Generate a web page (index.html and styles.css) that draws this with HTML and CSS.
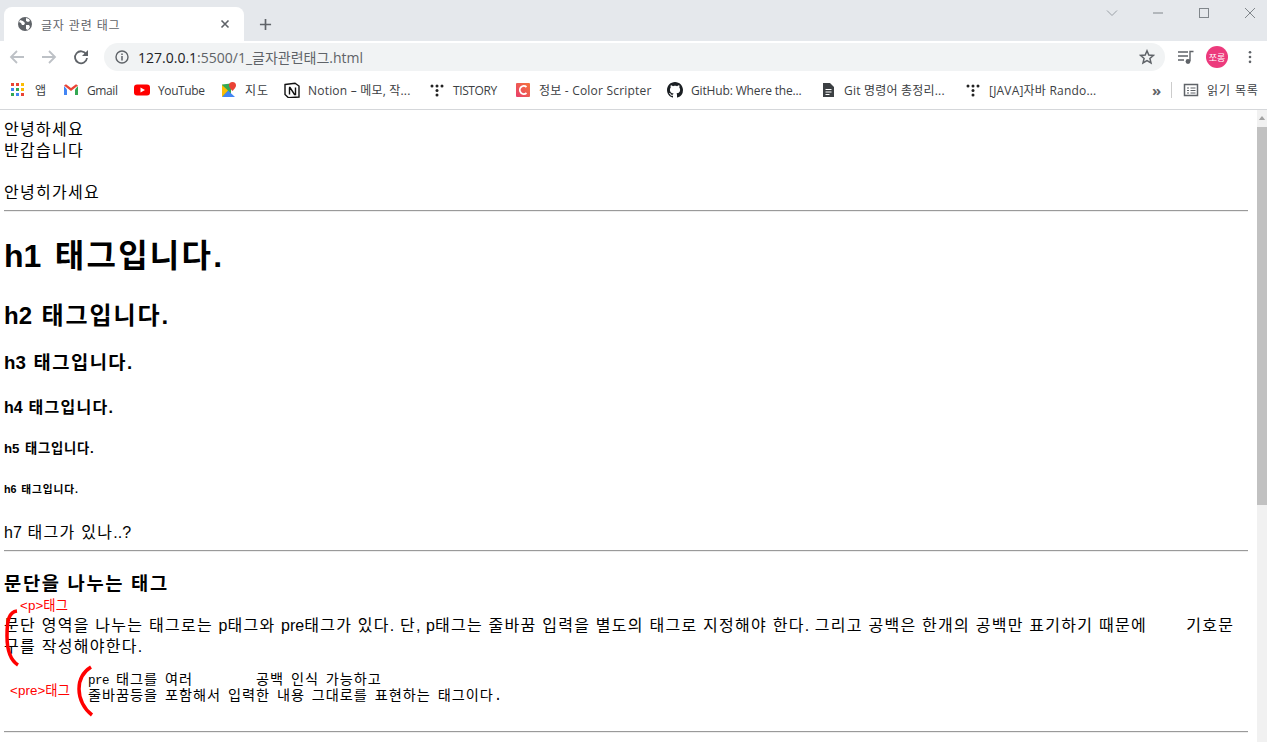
FILE: index.html
```html
<!DOCTYPE html>
<html lang="ko">
<head>
<meta charset="utf-8">
<title>글자 관련 태그</title>
<link rel="stylesheet" href="styles.css">
</head>
<body>
<div class="browser">
  <div class="tabstrip">
    <div class="tab">
      <svg class="tab-globe" viewBox="0 0 16 16"><circle cx="8" cy="8" r="7" fill="#5f6368"/><path d="M3 4l3 1 2 2-1 2-2 0-1-2-2-1zM9 2l3 1 1 2-2 1-2-1zM9 9l3 0 1 2-2 3-2-1z" fill="#fff"/></svg>
      <span class="tab-title">글자 관련 태그</span>
      <svg class="tab-close" viewBox="0 0 10 10"><path d="M1.5 1.5l7 7M8.5 1.5l-7 7" stroke="#5f6368" stroke-width="1.6"/></svg>
    </div>
    <svg class="newtab" viewBox="0 0 14 14"><path d="M7 1v12M1 7h12" stroke="#5f6368" stroke-width="1.8"/></svg>
    <div class="winctl">
      <svg class="win-ico" viewBox="0 0 12 12"><path d="M1 3.5l5 5 5-5" fill="none" stroke="#9aa0a6"/></svg>
      <svg class="win-ico" viewBox="0 0 12 12"><path d="M1 6h10" stroke="#80868b"/></svg>
      <svg class="win-ico" viewBox="0 0 12 12"><rect x="1.5" y="1.5" width="9" height="9" fill="none" stroke="#80868b"/></svg>
      <svg class="win-ico" viewBox="0 0 12 12"><path d="M1 1l10 10M11 1L1 11" stroke="#80868b"/></svg>
    </div>
  </div>
  <div class="toolbar">
    <svg class="nav" viewBox="0 0 16 16"><path d="M15 8H2M8 2L2 8l6 6" fill="none" stroke="#bdc1c6" stroke-width="1.8"/></svg>
    <svg class="nav" viewBox="0 0 16 16"><path d="M1 8h13M8 2l6 6-6 6" fill="none" stroke="#bdc1c6" stroke-width="1.8"/></svg>
    <svg class="nav" viewBox="0 0 16 16"><path d="M13.2 5.2A6 6 0 1 0 14 9" fill="none" stroke="#5f6368" stroke-width="1.8"/><path d="M15 1v6H9z" fill="#5f6368"/></svg>
    <div class="omnibox">
      <svg class="info" viewBox="0 0 14 14"><circle cx="7" cy="7" r="6" fill="none" stroke="#5f6368" stroke-width="1.4"/><path d="M7 6v4.4M7 3.4v1.5" stroke="#5f6368" stroke-width="1.5"/></svg>
      <span class="url">127.0.0.1<span class="url-dim">:5500/1_글자관련태그.html</span></span>
      <svg class="star" viewBox="0 0 16 16"><path d="M8 1.8l1.8 4.2 4.6.4-3.5 3 1.1 4.5L8 11.5l-4 2.4 1.1-4.5-3.5-3 4.6-.4z" fill="none" stroke="#5f6368" stroke-width="1.5"/></svg>
    </div>
    <svg class="media" viewBox="0 0 16 16"><path d="M0 3h10M0 7h10M0 11h6" stroke="#5f6368" stroke-width="1.4"/><path d="M12 12V2.5h3.5" fill="none" stroke="#5f6368" stroke-width="1.4"/><circle cx="10" cy="12.5" r="2.4" fill="#5f6368"/></svg>
    <div class="avatar">쪼롱</div>
    <svg class="menu" viewBox="0 0 4 16"><circle cx="2" cy="2.5" r="1.5" fill="#5f6368"/><circle cx="2" cy="8" r="1.5" fill="#5f6368"/><circle cx="2" cy="13.5" r="1.5" fill="#5f6368"/></svg>
  </div>
  <div class="bookmarks">
    <div class="bm bm-apps">
      <svg class="bm-ico" viewBox="0 0 14 14">
        <rect x="0" y="0" width="3" height="3" fill="#ea4335"/><rect x="5" y="0" width="3" height="3" fill="#ea4335"/><rect x="10" y="0" width="3" height="3" fill="#fbbc04"/>
        <rect x="0" y="5" width="3" height="3" fill="#4285f4"/><rect x="5" y="5" width="3" height="3" fill="#34a853"/><rect x="10" y="5" width="3" height="3" fill="#fbbc04"/>
        <rect x="0" y="10" width="3" height="3" fill="#34a853"/><rect x="5" y="10" width="3" height="3" fill="#4285f4"/><rect x="10" y="10" width="3" height="3" fill="#ea4335"/>
      </svg><span>앱</span>
    </div>
    <div class="bm">
      <svg class="bm-ico" viewBox="0 0 16 16"><path d="M1 4v9h3V7.500z" fill="#4285f4"/><path d="M12 7.500V13h3V4z" fill="#34a853"/><path d="M1 3.500L8 9l7-5.500-2-1.200L8 6 3 2.300z" fill="#ea4335"/></svg><span class="tight">Gmail</span>
    </div>
    <div class="bm">
      <svg class="bm-ico" viewBox="0 0 16 16"><rect x="0" y="2.500" width="16" height="11" rx="3" fill="#f00"/><path d="M6.500 5.500v5L11 8z" fill="#fff"/></svg><span class="tight">YouTube</span>
    </div>
    <div class="bm">
      <svg class="bm-ico" viewBox="0 0 16 16"><path d="M1 2.500l9-1v13H1z" fill="#34a853"/><path d="M1 15l6-6.500L14 15z" fill="#4285f4"/><path d="M1 3l6 5.500L1 15z" fill="#fbbc04"/><path d="M11.500 0a3.500 3.500 0 0 1 3.500 3.500c0 2.300-3.500 5.500-3.500 5.500S8 5.800 8 3.500A3.500 3.500 0 0 1 11.500 0z" fill="#ea4335"/></svg><span class="wide">지도</span>
    </div>
    <div class="bm">
      <svg class="bm-ico" viewBox="0 0 16 16"><path d="M1 2.500L11 1.200l4 2.800v11l-10.500.8L1 12.500z" fill="#fff" stroke="#111" stroke-width="1.400"/><path d="M5.500 5.500v7M5 5.500h1l4.500 7h1v-7" fill="none" stroke="#111" stroke-width="1.400"/></svg><span class="hangul-mix">Notion – 메모, 작...</span>
    </div>
    <div class="bm">
      <svg class="bm-ico" viewBox="0 0 16 16"><circle cx="3" cy="4" r="1.500" fill="#222"/><circle cx="8" cy="4" r="1.500" fill="#222"/><circle cx="13" cy="4" r="1.500" fill="#222"/><circle cx="8" cy="8.500" r="1.500" fill="#222"/><circle cx="8" cy="13" r="1.500" fill="#222"/></svg><span class="tight">TISTORY</span>
    </div>
    <div class="bm">
      <svg class="bm-ico" viewBox="0 0 16 16"><defs><linearGradient id="cs" x1="0" y1="1" x2="1" y2="0"><stop offset="0" stop-color="#e83e6c"/><stop offset="1" stop-color="#f4743b"/></linearGradient></defs><rect x="1" y="1" width="14" height="14" rx="1" fill="url(#cs)"/><path d="M11.500 5a4 4 0 1 0 0 6" fill="none" stroke="#fff" stroke-width="1.800"/></svg><span class="hangul-mix">정보 - Color Scripter</span>
    </div>
    <div class="bm">
      <svg class="bm-ico" viewBox="0 0 16 16"><path fill="#1b1f23" d="M8 0C3.580 0 0 3.580 0 8c0 3.540 2.290 6.530 5.470 7.590.4.070.55-.17.55-.38 0-.19-.01-.82-.01-1.490-2.010.37-2.530-.49-2.690-.94-.09-.23-.48-.94-.82-1.130-.28-.15-.68-.52-.01-.53.630-.01 1.080.58 1.230.82.720 1.210 1.870.87 2.330.66.070-.52.280-.87.510-1.070-1.780-.2-3.640-.89-3.640-3.950 0-.87.310-1.590.82-2.150-.08-.2-.36-1.020.08-2.120 0 0 .67-.21 2.200.82.640-.18 1.320-.27 2-.27.680 0 1.360.09 2 .27 1.530-1.040 2.200-.82 2.200-.82.440 1.100.160 1.920.08 2.120.510.560.820 1.270.820 2.150 0 3.070-1.870 3.750-3.650 3.950.290.250.540.730.540 1.480 0 1.070-.01 1.930-.01 2.200 0 .210.150.460.550.380A8.013 8.013 0 0 0 16 8c0-4.420-3.580-8-8-8z"/></svg><span>GitHub: Where the...</span>
    </div>
    <div class="bm">
      <svg class="bm-ico" viewBox="0 0 16 16"><path d="M3 1h7l4 4v10H3z" fill="#3c4043"/><path d="M5.500 7.500h6M5.500 10h6M5.500 12.500h4" stroke="#fff"/></svg><span class="hangul-mix">Git 명령어 총정리...</span>
    </div>
    <div class="bm">
      <svg class="bm-ico" viewBox="0 0 16 16"><circle cx="3" cy="4" r="1.500" fill="#222"/><circle cx="8" cy="4" r="1.500" fill="#222"/><circle cx="13" cy="4" r="1.500" fill="#222"/><circle cx="8" cy="8.500" r="1.500" fill="#222"/><circle cx="8" cy="13" r="1.500" fill="#222"/></svg><span class="hangul-mix">[JAVA]자바 Rando...</span>
    </div>
    <div class="bm-end">
      <span class="chev">»</span>
      <i class="bm-sep"></i>
      <svg class="bm-ico" viewBox="0 0 16 16"><rect x="1.500" y="2.500" width="13" height="11" fill="none" stroke="#5f6368" stroke-width="1.500"/><path d="M4 6h2M4 8.500h2M4 11h2M7.500 6h5M7.500 8.500h5M7.500 11h5" stroke="#5f6368"/></svg>
      <span class="readlist">읽기 목록</span>
    </div>
  </div>
  <div class="viewport">
    <main class="page">
      <div class="line">안녕하세요</div>
      <div class="line">반갑습니다</div>
      <div class="line">&nbsp;</div>
      <div class="line">안녕히가세요</div>
      <hr>
      <h1><span class="lat">h1</span> 태그입니다<span class="lat">.</span></h1>
      <h2><span class="lat">h2</span> 태그입니다<span class="lat">.</span></h2>
      <h3><span class="lat">h3</span> 태그입니다<span class="lat">.</span></h3>
      <h4><span class="lat">h4</span> 태그입니다<span class="lat">.</span></h4>
      <h5><span class="lat">h5</span> 태그입니다<span class="lat">.</span></h5>
      <h6><span class="lat">h6</span> 태그입니다<span class="lat">.</span></h6>
      <div class="line"><span class="lat">h7</span> 태그가 있나<span class="lat">..?</span></div>
      <hr>
      <h3 class="section-title">문단을 나누는 태그</h3>
      <p>문단 영역을 나누는 태그로는 <span class="lat">p</span>태그와 <span class="lat">pre</span>태그가 있다<span class="lat">.</span> 단<span class="lat">,</span> <span class="lat">p</span>태그는 줄바꿈 입력을 별도의 태그로 지정해야 한다<span class="lat">.</span> 그리고 공백은 한개의 공백만 표기하기 때문에 &nbsp;&nbsp;&nbsp;&nbsp;&nbsp; 기호문구를 작성해야한다<span class="lat">.</span></p>
      <pre><span class="pre-lat">pre</span> 태그를 여러         공백 인식 가능하고
줄바꿈등을 포함해서 입력한 내용 그대로를 표현하는 태그이다.

</pre>
      <hr>
      <div class="note note-p">&lt;p&gt;태그</div>
      <div class="note note-pre">&lt;pre&gt;태그</div>
      <svg class="brace brace-p" viewBox="0 0 14 56"><path d="M13 1C5 2 3 10 3 26c0 14 3 24 11 29" fill="none" stroke="#f00" stroke-width="3.500"/></svg>
      <svg class="brace brace-pre" viewBox="0 0 16 50"><path d="M14 1C6 6 2 14 2 23c0 10 5 20 13 26" fill="none" stroke="#f00" stroke-width="3.500"/></svg>
    </main>
    <div class="scrollbar">
      <div class="sb-btn"><svg viewBox="0 0 10 6" class="sb-arrow"><path d="M5 0l4 5H1z" fill="#a3a3a3"/></svg></div>
      <div class="sb-thumb"></div>
    </div>
  </div>
</div>
</body>
</html>
```
FILE: styles.css
```css
* { box-sizing: border-box; }
html, body { margin: 0; height: 100%; overflow: hidden; background: #fff; }
.browser { height: 742px; display: flex; flex-direction: column; font-family: "Open Sans", "Noto Sans CJK KR", sans-serif; }

.tabstrip { height: 41px; background: #e5e8ec; display: flex; align-items: flex-end; padding-left: 4px; flex: none; }
.tab { width: 240px; height: 34px; background: #fff; border-radius: 8px 8px 0 0; display: flex; align-items: center; padding: 0 14px 0 13px; }
.tab-globe { width: 16px; height: 16px; flex: none; }
.tab-title { margin-left: 8px; font-size: 12px; color: #5f6368; flex: 1; font-family: "Noto Sans CJK KR", sans-serif; letter-spacing: .8px; }
.tab-close { width: 10px; height: 10px; flex: none; }
.newtab { width: 13px; height: 13px; margin: 0 0 10px 15px; flex: none; }
.winctl { margin-left: auto; align-self: flex-start; display: flex; gap: 34px; padding: 7px 11px 0 0; }
.win-ico { width: 12px; height: 12px; display: block; }

.toolbar { height: 32px; display: flex; align-items: center; padding: 0 0 0 9px; flex: none; background: #fff; }
.nav { width: 16px; height: 16px; margin-right: 16px; flex: none; }
.omnibox { width: 1061px; height: 28px; margin-left: -1px; background: #f1f3f4; border-radius: 14px; display: flex; align-items: center; padding: 0 10px 0 11px; flex: none; }
.info { width: 14px; height: 14px; flex: none; }
.url { margin-left: 9px; font-size: 14px; color: #202124; flex: 1; font-family: "Open Sans", "Noto Sans CJK KR", sans-serif; }
.url-dim { color: #5f6368; }
.star { width: 16px; height: 16px; flex: none; }
.media { width: 16px; height: 16px; margin-left: 13px; flex: none; }
.avatar { width: 22px; height: 22px; border-radius: 50%; background: #ec3a7c; color: #fff; font-size: 9px; display: flex; align-items: center; justify-content: center; margin-left: 12px; flex: none; font-family: "Noto Sans CJK KR", sans-serif; }
.menu { width: 4px; height: 14px; margin-left: 20px; flex: none; }

.bookmarks { height: 37px; padding: 0 0 2px 11px; border-bottom: 1px solid #d5d7da; display: grid; grid-template-columns: 52px 71px 87px 63px 145px 86px 152px 153px 145px 187px 1fr; align-items: center; flex: none; background: #fff; font-size: 12px; letter-spacing: -.15px; color: #3c4043; }
.bm { display: flex; align-items: center; gap: 8px; white-space: nowrap; }
.bm-apps { gap: 10px; }
.bm-ico { width: 16px; height: 16px; flex: none; display: block; }
.bm-apps .bm-ico { width: 14px; height: 14px; }
.bm-end { display: flex; align-items: center; }
.chev { font-size: 15px; color: #5f6368; font-weight: 700; width: 19px; line-height: 16px; }
.bm-sep { width: 1px; height: 16px; background: #ccc; margin-right: 11px; }
.readlist { margin-left: 8px; white-space: nowrap; letter-spacing: .9px; }
.wide { letter-spacing: .9px; }
.hangul-mix { letter-spacing: .2px; }
.tight { letter-spacing: -.4px; }

.viewport { flex: 1; min-height: 0; display: flex; overflow: hidden; }
.page { flex: 1; min-width: 0; position: relative; padding: 9px 9px 0 4px; color: #000; font-family: "Liberation Sans", "Noto Sans CJK KR", sans-serif; font-size: 16px; line-height: 21px; letter-spacing: .08em; overflow: hidden; }
.lat { letter-spacing: 0; }
.line { height: 21px; }
hr { margin: 7px 0 8px; border: 0; border-top: 1px solid #9a9a9a; border-bottom: 1px solid #eee; height: 2px; }
h1, h2, h3, h4, h5, h6 { font-weight: 700; }
h1 { font-size: 32px; line-height: 43px; margin: 23.44px 0 19.44px; letter-spacing: .07em; word-spacing: 2.3px; }
h2 { font-size: 24px; line-height: 32px; margin: 21.44px 0 17.92px; letter-spacing: .08em; word-spacing: 1px; }
h3 { font-size: 18.72px; line-height: 25px; margin: 16.72px 0 20.72px; letter-spacing: .08em; word-spacing: 1px; }
h4 { font-size: 16px; line-height: 21px; margin: 22.28px 0 21.28px; letter-spacing: .08em; }
h5 { font-size: 13.28px; line-height: 18px; margin: 22.18px 0; letter-spacing: .06em; word-spacing: 1px; }
h6 { font-size: 10.72px; line-height: 14px; margin: 23.98px 0 25.98px; letter-spacing: .08em; word-spacing: 1px; }
.section-title { margin: 18.72px 0; letter-spacing: .09em; word-spacing: 0; }
p { margin: 18.72px 0 16px; word-spacing: -.1px; }
pre { margin: 16px 0 12px 84px; font-family: "Liberation Mono", "Noto Sans CJK KR", monospace; font-size: 14.2px; line-height: 15px; letter-spacing: .94px; word-spacing: -2.46px; }
.pre-lat { font-size: 12.5px; letter-spacing: -.5px; }

.note { position: absolute; color: #f00; font-size: 13.33px; line-height: 16px; letter-spacing: .1px; font-family: "Liberation Sans", "Noto Sans CJK KR", sans-serif; white-space: nowrap; }
.note-p { left: 20px; top: 488px; }
.note-pre { left: 10px; top: 573px; }
.brace { position: absolute; overflow: visible; }
.brace-p { left: 4px; top: 500px; width: 14px; height: 56px; }
.brace-pre { left: 77px; top: 556px; width: 16px; height: 50px; }

.scrollbar { width: 10px; flex: none; background: #f1f1f1; }
.sb-btn { height: 17px; display: flex; align-items: center; justify-content: center; }
.sb-arrow { width: 8px; height: 5px; }
.sb-thumb { height: 378px; background: #c1c1c1; }
```
